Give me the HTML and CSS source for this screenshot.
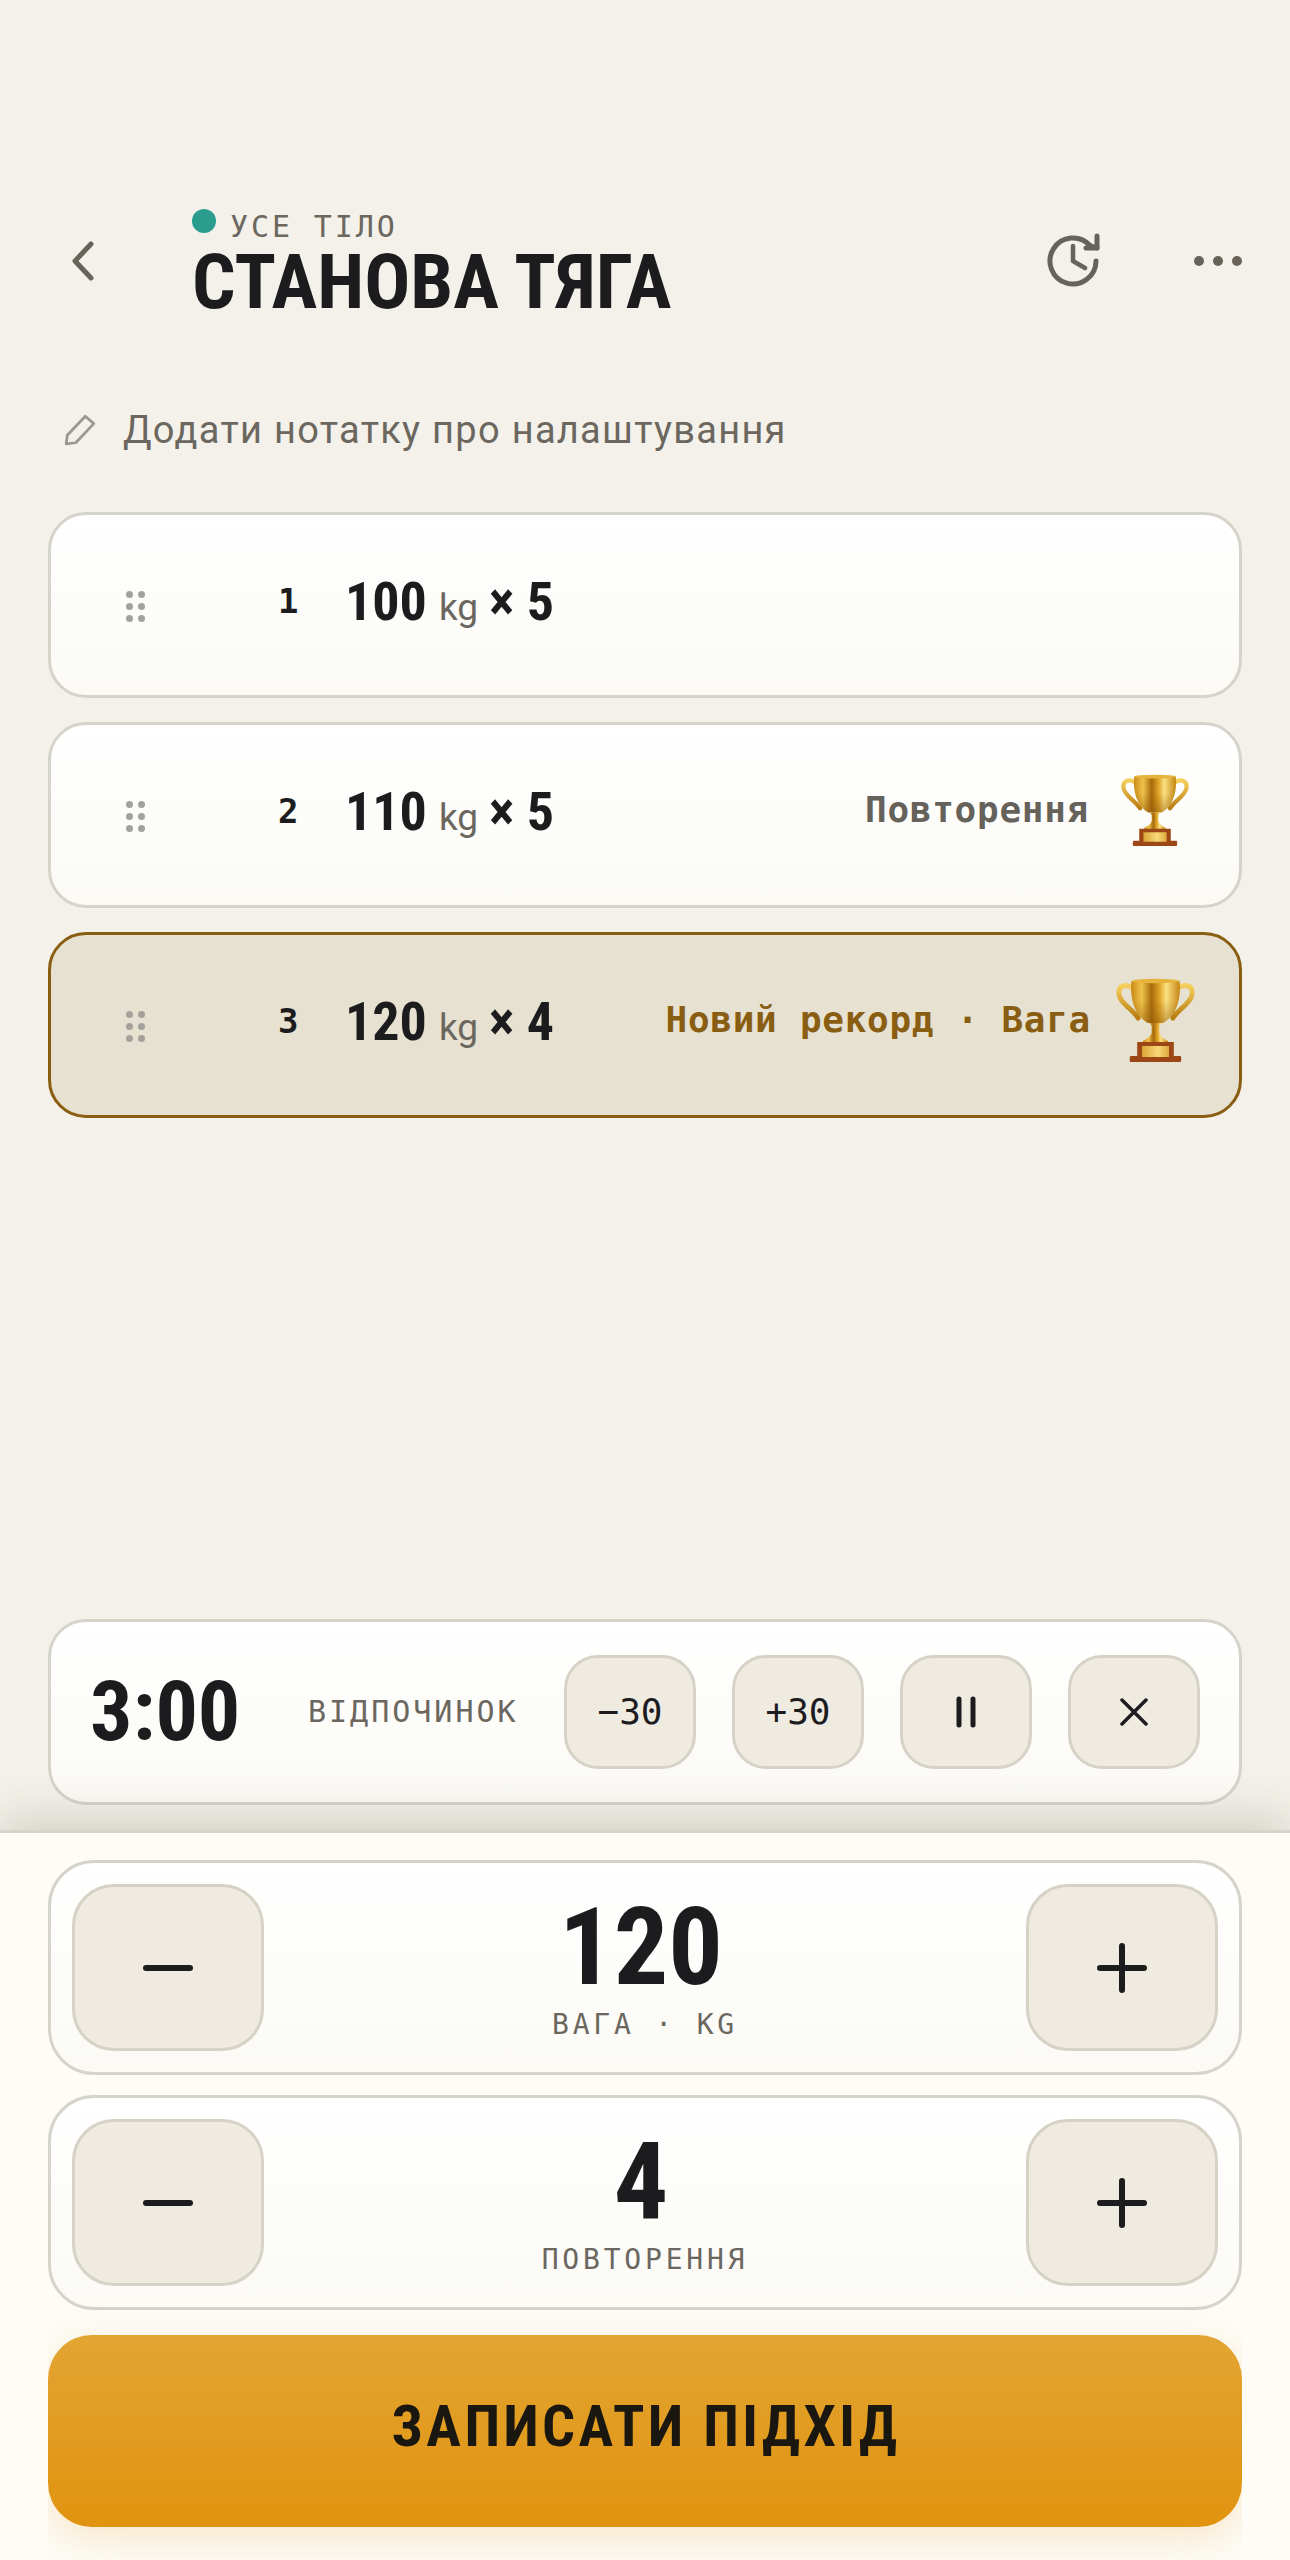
FILE: index.html
```html
<!DOCTYPE html>
<html lang="uk">
<head>
<meta charset="utf-8">
<title>Станова тяга</title>
<link rel="stylesheet" href="styles.css">
</head>
<body>
<svg class="defs" width="0" height="0" aria-hidden="true">
  <defs>
    <linearGradient id="goldBowl" x1="0" x2="1" y1="0" y2="0">
      <stop offset="0" stop-color="#c98b16"/>
      <stop offset=".22" stop-color="#f0c24a"/>
      <stop offset=".42" stop-color="#a76a0c"/>
      <stop offset=".58" stop-color="#dfa326"/>
      <stop offset=".72" stop-color="#fbe283"/>
      <stop offset="1" stop-color="#c58512"/>
    </linearGradient>
    <linearGradient id="goldShade" x1="0" x2="0" y1="0" y2="1">
      <stop offset=".45" stop-color="#8a5206" stop-opacity="0"/>
      <stop offset="1" stop-color="#8a5206" stop-opacity=".45"/>
    </linearGradient>
    <linearGradient id="goldHandle" x1="0" x2="0" y1="0" y2="1">
      <stop offset="0" stop-color="#f5cf5c"/>
      <stop offset="1" stop-color="#b97c10"/>
    </linearGradient>
    <linearGradient id="goldPlate" x1="0" x2="1" y1="0" y2="0">
      <stop offset="0" stop-color="#d9a436"/>
      <stop offset=".6" stop-color="#f8d878"/>
      <stop offset="1" stop-color="#dca93c"/>
    </linearGradient>
    <symbol id="trophy" viewBox="0 0 82 84" preserveAspectRatio="none">
      <path d="M18 10C9 5 2 8 3 16c1 9 14 15 20 24" fill="none" stroke="url(#goldHandle)" stroke-width="5" stroke-linecap="round"/>
      <path d="M64 10c9-5 16-2 15 6-1 9-14 15-20 24" fill="none" stroke="url(#goldHandle)" stroke-width="5" stroke-linecap="round"/>
      <path d="M16 3h50c1 10 0 20-4 28-3 7-8 11-13 14H33c-5-3-10-7-13-14-4-8-5-18-4-28z" fill="url(#goldBowl)"/>
      <path d="M16 3h50c1 10 0 20-4 28-3 7-8 11-13 14H33c-5-3-10-7-13-14-4-8-5-18-4-28z" fill="url(#goldShade)"/>
      <ellipse cx="41" cy="3" rx="25" ry="2.200" fill="#e6b43d"/>
      <path d="M35 45h12l-2 3v6c0 4 5 7 9 9v2H28v-2c4-2 9-5 9-9v-6z" fill="url(#goldBowl)"/>
      <path d="M22 64h38v14h7c1 1 1 6 0 6H15c-1 0-1-5 0-6h7z" fill="#9e4716"/>
      <rect x="27" y="68" width="28" height="11" fill="url(#goldPlate)"/>
    </symbol>
  </defs>
</svg>
<main class="screen">
  <header class="top">
    <button class="back" aria-label="Назад">
      <svg viewBox="0 0 24 40" width="24" height="40"><path d="M19 3 3 20l16 17" fill="none" stroke="#67635b" stroke-width="5" stroke-linecap="round" stroke-linejoin="round"/></svg>
    </button>
    <div class="heading">
      <div class="eyebrow"><span class="dot"></span><span class="eyebrow-text">УСЕ ТІЛО</span></div>
      <h1 class="title">СТАНОВА ТЯГА</h1>
    </div>
    <svg class="history" viewBox="0 0 56 56" width="56" height="56">
      <path d="M50 28A23 23 0 1 1 44 12.500L51 15" fill="none" stroke="#67635b" stroke-width="5" stroke-linecap="round" stroke-linejoin="round"/>
      <path d="M51 3v12H40" fill="none" stroke="#67635b" stroke-width="5" stroke-linecap="round" stroke-linejoin="round"/>
      <path d="M27 13v15l12 7" fill="none" stroke="#67635b" stroke-width="4.500" stroke-linecap="round" stroke-linejoin="round"/>
    </svg>
    <div class="more" aria-label="Ще"><i></i><i></i><i></i></div>
  </header>

  <div class="note">
    <svg viewBox="0 0 32 32" width="34" height="34"><path d="M3 29l1-8L21 3l8 7-17 18z" fill="none" stroke="#9a9890" stroke-width="2.600" stroke-linejoin="round"/></svg>
    <span>Додати нотатку про налаштування</span>
  </div>

  <section class="sets">
    <article class="set">
      <div class="grip"><i></i><i></i><i></i><i></i><i></i><i></i></div>
      <span class="num">1</span>
      <div class="val"><b>100</b><span class="kg">kg</span><b>× 5</b></div>
    </article>
    <article class="set">
      <div class="grip"><i></i><i></i><i></i><i></i><i></i><i></i></div>
      <span class="num">2</span>
      <div class="val"><b>110</b><span class="kg">kg</span><b>× 5</b></div>
      <span class="tag">Повторення</span>
      <svg class="cup"><use href="#trophy"/></svg>
    </article>
    <article class="set set-pr">
      <div class="grip"><i></i><i></i><i></i><i></i><i></i><i></i></div>
      <span class="num">3</span>
      <div class="val"><b>120</b><span class="kg">kg</span><b>× 4</b></div>
      <span class="tag tag-pr">Новий рекорд · Вага</span>
      <svg class="cup cup-pr"><use href="#trophy"/></svg>
    </article>
  </section>

  <div class="grow"></div>

  <section class="timer">
    <span class="clock">3:00</span>
    <span class="rest">ВІДПОЧИНОК</span>
    <div class="tbtns">
      <button class="tbtn">−30</button>
      <button class="tbtn">+30</button>
      <button class="tbtn" aria-label="Пауза"><svg viewBox="0 0 20 32" width="20" height="32"><path d="M3 3v26M17 3v26" stroke="#1c1c1e" stroke-width="5" stroke-linecap="round"/></svg></button>
      <button class="tbtn" aria-label="Закрити"><svg viewBox="0 0 28 28" width="28" height="28"><path d="M2 2l24 24M26 2 2 26" stroke="#1c1c1e" stroke-width="3.500" stroke-linecap="round"/></svg></button>
    </div>
  </section>

  <section class="sheet">
    <div class="stepper">
      <button class="sbtn" aria-label="Менше"><span class="minus"></span></button>
      <div class="read"><strong class="shift">120</strong><span>ВАГА · KG</span></div>
      <button class="sbtn" aria-label="Більше"><span class="plus"></span></button>
    </div>
    <div class="stepper">
      <button class="sbtn" aria-label="Менше"><span class="minus"></span></button>
      <div class="read"><strong class="shift">4</strong><span>ПОВТОРЕННЯ</span></div>
      <button class="sbtn" aria-label="Більше"><span class="plus"></span></button>
    </div>
    <div class="cta-clip"><button class="cta">ЗАПИСАТИ ПІДХІД</button></div>
  </section>
</main>
</body>
</html>
```

FILE: styles.css
```css
* { box-sizing: border-box; }
html, body { margin: 0; padding: 0; }
body { background: #f4f1ea; color: #1c1c1e; font-family: Roboto, "Noto Sans", sans-serif; }
button { font: inherit; color: inherit; padding: 0; cursor: pointer; }
.defs { position: absolute; }
.screen { height: 2560px; display: flex; flex-direction: column; overflow: hidden; }

.top { display: flex; align-items: center; height: 116px; margin-top: 202px; padding-left: 72px; }
.back { width: 24px; height: 40px; border: 0; background: none; margin-right: 96px; margin-top: 2px; }
.heading { width: 0; flex: 1; padding-top: 5px; }
.eyebrow { display: flex; align-items: center; gap: 14px; font: 400 30px/36px "DejaVu Sans Mono", monospace; letter-spacing: 2.900px; color: #6b675f; }
.eyebrow-text { position: relative; top: 3px; }
.dot { width: 24px; height: 24px; border-radius: 50%; background: #2a9d8f; margin-top: -6px; }
.title { margin: 2px 0 0 0; font: 700 76.500px/76px Roboto, sans-serif; font-stretch: 75%; white-space: nowrap; color: #1c1c1e; }
.history { margin-right: 92px; margin-top: 2px; }
.more { display: flex; gap: 9px; margin-right: 48px; margin-top: 2px; }
.more i { width: 10px; height: 10px; border-radius: 50%; background: #67635b; }

.note { display: flex; align-items: center; gap: 26px; margin-top: 88px; padding-left: 63px; height: 48px; font-size: 38px; letter-spacing: 1.3px; color: #6b675f; }

.sets { display: flex; flex-direction: column; gap: 24px; margin: 58px 48px 0; }
.set { display: flex; align-items: center; height: 186px; border: 3px solid #d6d3cb; border-radius: 38px; background: linear-gradient(#ffffff, #fbfaf5); padding: 0 50px 0 75px; }
.grip { display: grid; grid-template-columns: 7px 7px; gap: 5px; width: 19px; margin-top: 2px; }
.grip i { width: 7px; height: 7px; border-radius: 50%; background: #a3a19b; }
.num { width: 34px; margin-left: 133px; font: 700 34px/36px "DejaVu Sans Mono", monospace; margin-top: -8px; }
.val { margin-left: 33px; display: flex; align-items: baseline; gap: 11px; margin-top: -6px; white-space: nowrap; }
.val b { font: 700 54px/64px Roboto, sans-serif; font-stretch: 75%; }
.kg { font-size: 37px; color: #6b675f; margin-left: 1px; }
.tag { margin-left: auto; font: 700 36px/44px "DejaVu Sans Mono", monospace; letter-spacing: .72px; color: #65625b; margin-top: -10px; }
.tag-pr { color: #8a5e12; }
.cup { width: 68px; height: 72px; margin-left: 32px; margin-top: -10px; flex: none; }
.cup-pr { width: 79px; height: 84px; margin-left: 25px; margin-right: -6px; }
.set-pr { background: #e7e1d1; border-color: #8a5e12; }

.grow { flex: 1; }

.timer { display: flex; align-items: center; height: 186px; margin: 0 48px 25px; border: 3px solid #d6d3cb; border-radius: 38px; background: linear-gradient(#ffffff, #fbfaf5); padding: 0 39px 0 39px; }
.clock { font: 700 84px/90px Roboto, sans-serif; font-stretch: 75%; width: 218px; }
.rest { font: 400 30px/36px "DejaVu Sans Mono", monospace; letter-spacing: 3px; color: #6b675f; }
.tbtns { display: flex; gap: 36px; margin-left: auto; }
.tbtn { width: 132px; height: 114px; display: flex; align-items: center; justify-content: center; border: 3px solid #d6d2c6; border-radius: 34px; background: #efebe1; font: 400 36px/40px "DejaVu Sans Mono", monospace; color: #1c1c1e; }

.sheet { position: relative; z-index: 1; display: flex; flex-direction: column; gap: 20px; padding: 27px 48px 0; flex: none; height: 730px; background: #fdfcf7; border-top: 3px solid #d6d3cb; box-shadow: 0 -14px 40px rgba(60, 55, 40, .16); }
.stepper { display: flex; align-items: center; justify-content: space-between; height: 215px; border: 3px solid #d6d3cb; border-radius: 46px; background: linear-gradient(#ffffff, #fbfaf5); padding: 0 21px; flex: none; }
.sbtn { width: 192px; height: 167px; display: flex; align-items: center; justify-content: center; border: 3px solid #d6d2c6; border-radius: 42px; background: #efebe1; }
.minus { width: 50px; height: 6px; border-radius: 3px; background: #1c1c1e; }
.plus { position: relative; width: 50px; height: 50px; }
.plus::before, .plus::after { content: ""; position: absolute; background: #1c1c1e; border-radius: 3px; }
.plus::before { left: 0; right: 0; top: 22px; height: 6px; }
.plus::after { top: 0; bottom: 0; left: 22px; width: 6px; }
.read { display: flex; flex-direction: column; align-items: center; }
.read strong { font: 700 108px/110px Roboto, sans-serif; font-stretch: 75%; margin: -2px 0 0; }
.read strong.shift { margin-right: 8px; }
.read span { font: 400 28px/34px "DejaVu Sans Mono", monospace; letter-spacing: 3.800px; color: #6b675f; margin-top: 6px; }

.cta-clip { overflow-x: clip; margin-top: 5px; padding-bottom: 60px; }
.cta { display: block; width: 100%; height: 192px; border: 0; border-radius: 44px; background: linear-gradient(#e3a532, #e0930f); box-shadow: 0 12px 40px rgba(224, 147, 15, .2); font: 700 58px/70px Roboto, sans-serif; font-stretch: 75%; letter-spacing: 3.400px; color: #1a1610; padding: 0 0 10px 2px; }
```
